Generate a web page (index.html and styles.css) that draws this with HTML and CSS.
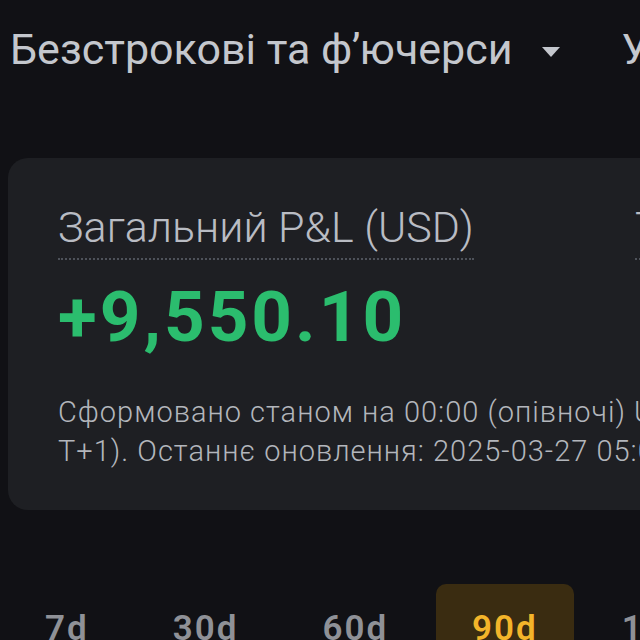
FILE: index.html
```html
<!DOCTYPE html>
<html lang="uk">
  <head>
    <meta charset="UTF-8" />
    <meta name="viewport" content="width=device-width, initial-scale=1.0" />
    <title>P&amp;L</title>
    <link rel="stylesheet" href="styles.css">
  </head>
  <body>
    <div class="tabs-top">
      <div class="market">
        Безстрокові та ф’ючерси
        <span class="caret"></span>
      </div>
      <div class="market">Усі ринки</div>
    </div>

    <div class="card">
      <div class="stats">
        <div class="stat">
          <span class="stat-label">Загальний P&amp;L (USD)</span>
        </div>
        <div class="stat">
          <span class="stat-label">Тенденція</span>
        </div>
      </div>
      <div class="pnl">+9,550.10</div>
      <p class="note">Сформовано станом на 00:00 (опівночі) UTC (UTC+0, GM<br>T+1). Останнє оновлення: 2025-03-27 05:00</p>
    </div>

    <div class="periods">
      <div class="period">7d</div>
      <div class="period">30d</div>
      <div class="period">60d</div>
      <div class="period active">90d</div>
      <div class="period">180d</div>
    </div>
  </body>
</html>
```

FILE: styles.css
```css
body {
  margin: 0;
  width: 640px;
  height: 640px;
  overflow: hidden;
  background: #111115;
  font-family: Roboto, "Noto Sans", sans-serif;
  color: #c3c6cc;
}
.tabs-top {
  display: flex;
  gap: 62px;
  padding: 24px 0 0 10px;
  white-space: nowrap;
}
.market {
  display: flex;
  align-items: center;
  gap: 29px;
  font-size: 43px;
  line-height: 1.2;
  color: #c4c7cd;
}
.caret {
  width: 0;
  height: 0;
  border-left: 9px solid transparent;
  border-right: 9px solid transparent;
  border-top: 10px solid #c4c7cd;
  margin-top: 4px;
}
.card {
  margin: 82px 0 0 8px;
  width: 760px;
  height: 352px;
  box-sizing: border-box;
  padding: 44px 50px 0 50px;
  background: #1e1f23;
  border-radius: 20px;
  white-space: nowrap;
}
.stats {
  display: flex;
  gap: 161px;
}
.stat-label {
  display: inline-block;
  font-size: 43px;
  font-weight: 300;
  line-height: 1.2;
  color: #b9bcc3;
  padding-bottom: 5px;
  border-bottom: 2px dotted #4e525a;
}
.pnl {
  margin-top: 14px;
  font-size: 71px;
  font-weight: 700;
  letter-spacing: 3px;
  line-height: 1.2;
  color: #2bbd6e;
}
.note {
  margin: 34px 0 0;
  font-size: 29px;
  font-weight: 300;
  letter-spacing: 1px;
  line-height: 39px;
  color: #b3b6bc;
}
.periods {
  display: flex;
  gap: 12px;
  margin: 74px 0 0 9px;
  white-space: nowrap;
}
.period {
  padding: 24px 36px 20px 36px;
  border-radius: 10px;
  font-size: 35px;
  font-weight: 600;
  letter-spacing: 2px;
  color: #8f9197;
}
.period.active {
  background: #3a2c11;
  color: #f3b52a;
}
```
